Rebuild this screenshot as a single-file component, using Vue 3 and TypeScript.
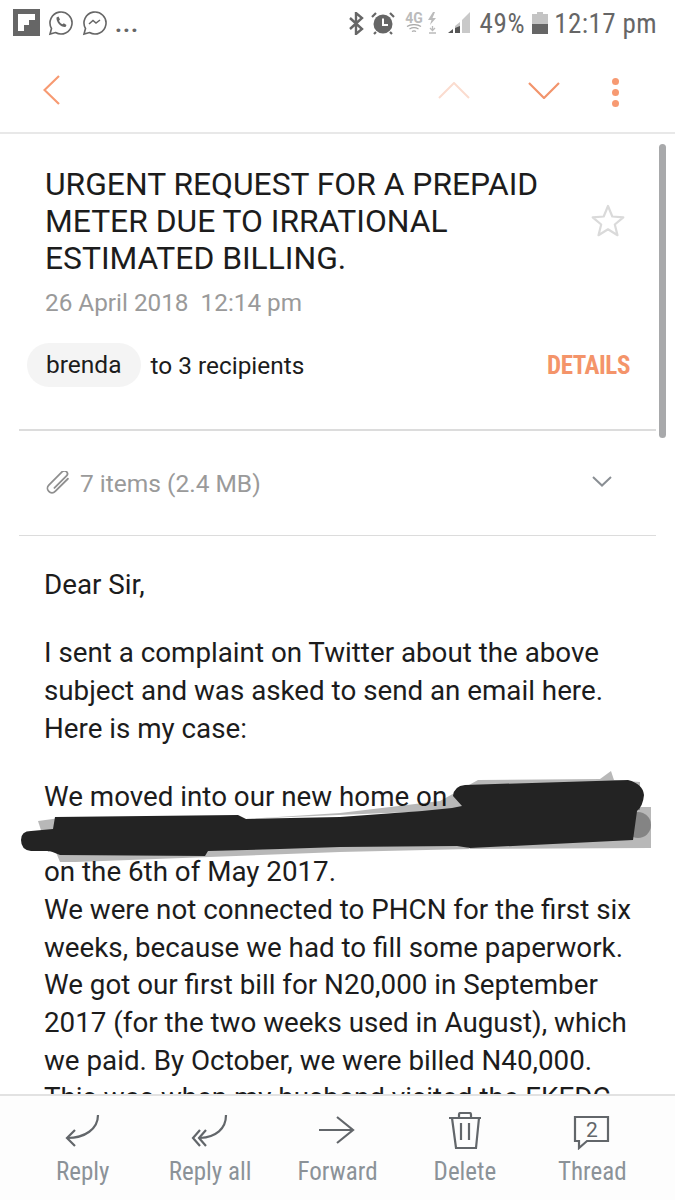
<template>
  <div class="screen">
    <div class="status">
      <svg class="ic-flip" width="27" height="27" viewBox="0 0 27 27">
        <rect width="27" height="27" fill="#666" />
        <path d="M5 5h17v6h-6v5h-5v6H5z" fill="#fff" />
      </svg>
      <svg class="ic-chat" width="25" height="26" viewBox="0 0 25 26" fill="none" stroke="#666" stroke-width="1.6">
        <path d="M2 24l1.500-5.500a11 11 0 1 1 4 4z" />
        <path d="M8.500 7.500l2-1 1.500 3-1 1.200c.8 1.700 2 2.900 3.600 3.600l1.200-1 2.700 1.700-1 2c-4.500.5-9.500-5-9-9.500z" fill="#666" stroke="none" />
      </svg>
      <svg class="ic-chat" width="25" height="26" viewBox="0 0 25 26" fill="none" stroke="#666" stroke-width="1.600">
        <path d="M2 24l1.500-5.500a11 11 0 1 1 4 4z" />
        <path d="M7 14l4-3.500 3 2.500 4-3" stroke-width="1.500" />
      </svg>
      <span class="more">...</span>
      <div class="spacer"></div>
      <svg class="ic-bt" width="16" height="23" viewBox="0 0 16 23" fill="none" stroke="#666" stroke-width="2.400">
        <path d="M2 6l12 11-6 5V1l6 5L2 17" />
      </svg>
      <svg class="ic-alarm" width="24" height="24" viewBox="0 0 24 24">
        <circle cx="12" cy="13" r="9.500" fill="#666" />
        <path d="M1 6l4-4M23 6l-4-4M5 21l-2 2M19 21l2 2" stroke="#666" stroke-width="2.200" />
        <path d="M12 7.500V14h5" stroke="#fff" stroke-width="2" fill="none" />
      </svg>
      <div class="net">
        <span class="net-label">4G</span>
        <svg width="16" height="9" viewBox="0 0 16 9" fill="none" stroke="#aaa" stroke-width="1.300">
          <path d="M1 2.500c4-2.500 10-2.500 14 0M3.500 5c2.500-1.500 6.500-1.500 9 0M6 7.500c1.200-.7 2.800-.7 4 0" />
        </svg>
      </div>
      <svg class="ic-bolt" width="11" height="22" viewBox="0 0 11 22">
        <path d="M6 0L1 8h3.500L3 13l6-7H5.500L8 0z" fill="#bbb" />
        <path d="M5.500 14v4M3 16l2.500 2.500L8 16M2 21h7" stroke="#bbb" stroke-width="1.300" fill="none" />
      </svg>
      <svg class="ic-signal" width="24" height="22" viewBox="0 0 24 22">
        <path d="M1 21l5-4v4z" fill="#555" />
        <path d="M8 14l5-4v11H8z" fill="#c4c4c4" />
        <path d="M8 21v-5l5-2v7z" fill="#555" />
        <path d="M15 8l8-8v21h-8z" fill="#c9c9c9" />
      </svg>
      <span class="batt-text">49%</span>
      <svg class="ic-batt" width="16" height="22" viewBox="0 0 16 22">
        <path d="M5 0h6v2h5v20H0V2h5z" fill="#c4c4c4" />
        <path d="M0 12h16v10H0z" fill="#666" />
      </svg>
      <span class="clock">12:17 pm</span>
    </div>

    <div class="appbar">
      <svg class="ic-back" width="17" height="30" viewBox="0 0 17 30" fill="none" stroke="#f79a72" stroke-width="2.200">
        <path d="M16 1L1.500 15 16 29" />
      </svg>
      <div class="spacer"></div>
      <svg class="ic-up" width="32" height="17" viewBox="0 0 32 17" fill="none" stroke="#fbdccf" stroke-width="2">
        <path d="M1 16L16 1l15 15" />
      </svg>
      <svg class="ic-down" width="32" height="17" viewBox="0 0 32 17" fill="none" stroke="#f2946c" stroke-width="2.200">
        <path d="M1 1l15 15L31 1" />
      </svg>
      <div class="dots"><i></i><i></i><i></i></div>
    </div>

    <div class="content">
      <div class="head">
        <div class="title-row">
          <h1 class="title">URGENT REQUEST FOR A PREPAID METER DUE TO IRRATIONAL ESTIMATED BILLING.</h1>
          <svg class="ic-star" width="34" height="33" viewBox="0 0 34 33" fill="none" stroke="#dadada" stroke-width="2.200" stroke-linejoin="round">
            <path d="M17 2l4.300 10.500 11 .8-8.500 7.200 2.700 10.700L17 25.300 7.500 31.200l2.700-10.700-8.500-7.200 11-.8z" />
          </svg>
        </div>
        <div class="date">26 April 2018&nbsp; 12:14 pm</div>
        <div class="sender-row">
          <span class="chip">brenda</span>
          <span class="recipients">to 3 recipients</span>
          <div class="spacer"></div>
          <span class="details">DETAILS</span>
        </div>
      </div>

      <div class="attach">
        <svg class="ic-clip" width="24" height="24" viewBox="0 0 24 24" fill="none" stroke="#8f8f8f" stroke-width="1.800" stroke-linecap="round">
          <g transform="rotate(45 12 12)">
            <path d="M16 2V20a4.500 4.500 0 0 1-9 0V1a3 3 0 0 1 6 0V18" />
          </g>
        </svg>
        <span class="attach-text">7 items (2.4 MB)</span>
        <div class="spacer"></div>
        <svg class="ic-expand" width="20" height="11" viewBox="0 0 20 11" fill="none" stroke="#8a8f94" stroke-width="2">
          <path d="M1 1l9 8.500L19 1" />
        </svg>
      </div>

      <div class="body">
        <p>Dear Sir,</p>
        <p>I sent a complaint on Twitter about the above subject and was asked to send an email here.<br />Here is my case:</p>
        <p>We moved into our new home on<br />&nbsp;<br />on the 6th of May 2017.<br />We were not connected to PHCN for the first six weeks, because we had to fill some paperwork.<br />We got our first bill for N20,000 in September 2017 (for the two weeks used in August), which we paid. By October, we were billed N40,000.<br />This was when my husband visited the EKEDC</p>
      </div>
    </div>

    <div class="toolbar">
      <div class="tool" v-for="t in tools" :key="t.label">
        <svg width="44" height="38" viewBox="0 0 44 38" fill="none" stroke="#62666a" stroke-width="2.200" v-html="t.icon"></svg>
        <span class="tool-label">{{ t.label }}</span>
      </div>
    </div>

    <div class="scrollbar"></div>

    <svg class="redact" width="675" height="110" viewBox="0 770 675 110">
      <g fill="#000" fill-opacity=".28">
        <path d="M38 821L60 818 60 852 48 852z" />
        <path d="M55 850L340 840 460 842 470 849 340 852 76 862 60 862z" />
        <path d="M245 819L340 813 440 801 478 780 600 779 611 771 614 780 640 782 640 810H460z" />
        <path d="M460 807H651V848L470 849z" />
        <circle cx="638" cy="825" r="13" />
      </g>
      <path fill="#232323" d="M21 840Q21 831 31 831L53 829 55 817 238 815 246 819 340 817 422 811 452 808 462 806 453 796Q454 786 465 785L628 780Q643 784 644 795 643 806 637 811L633 840 470 848 457 846 340 847 280 849 208 851 205 856 60 855 50 851 31 851Q21 850 21 840z" />
    </svg>
  </div>
</template>

<script setup lang="ts">
interface Tool {
  label: string
  icon: string
}

const tools: Tool[] = [
  {
    label: 'Reply',
    icon: '<path d="M37 3c0 14-13 23-31 23" /><path d="M14 18l-8 8 8 8" />'
  },
  {
    label: 'Reply all',
    icon: '<path d="M38 3c0 14-10 22-26 23" /><path d="M18 18l-7 8 7 8M12 18l-7 8 7 8" />'
  },
  {
    label: 'Forward',
    icon: '<path d="M4 18h34" /><path d="M22 5l16 13-16 13" />'
  },
  {
    label: 'Delete',
    icon: '<path d="M6 6h32M16 6V2.500c0-1 .5-1.500 1.500-1.500h9c1 0 1.500.5 1.500 1.500V6M9 6l4 30h20l3-30M18 11v17M26 11v17" />'
  },
  {
    label: 'Thread',
    icon: '<path d="M5 5h33v24H17l-8 7v-7H5z" /><text x="22" y="25" text-anchor="middle" font-size="21" fill="#62666a" stroke="none" font-family="Roboto, sans-serif">2</text>'
  }
]
</script>

<style>
html, body {
  background: #fff;
}
</style>

<style scoped>
.screen {
  position: relative;
  width: 675px;
  height: 1200px;
  display: flex;
  flex-direction: column;
  overflow: hidden;
  background: #fff;
  font-family: Roboto, "Liberation Sans", sans-serif;
  color: #1c1c1c;
}

.spacer {
  flex: 1;
}

.status {
  height: 50px;
  padding: 9px 18px 0 13px;
  box-sizing: border-box;
  display: flex;
  align-items: flex-start;
  color: #666;
  flex: none;
}

.ic-flip {
  margin-right: 8px;
}

.ic-chat {
  margin: 1px 9px 0 0;
}

.more {
  font-size: 24px;
  line-height: 26px;
  font-weight: 700;
  margin: 2px 0 0 -1px;
  letter-spacing: 1px;
}

.ic-bt {
  margin: 3px 7px 0 0;
}

.ic-alarm {
  margin: 2px 10px 0 0;
}

.net {
  width: 17px;
  margin-right: 5px;
  display: flex;
  flex-direction: column;
  align-items: center;
  margin-top: 3px;
}

.net-label {
  font-size: 14px;
  line-height: 12px;
  font-weight: 700;
  color: #bbb;
}

.ic-bolt {
  margin: 3px 9px 0 0;
}

.ic-signal {
  margin: 3px 8px 0 0;
}

.batt-text {
  font-size: 27px;
  line-height: 30px;
  font-stretch: 75%;
  letter-spacing: .7px;
  margin-right: 7px;
}

.ic-batt {
  margin: 3px 6px 0 0;
}

.clock {
  font-size: 27px;
  line-height: 30px;
  font-stretch: 75%;
  letter-spacing: .4px;
}

.appbar {
  height: 84px;
  flex: none;
  box-sizing: border-box;
  border-bottom: 2px solid #e8e8e8;
  display: flex;
  align-items: flex-start;
  padding: 25px 56px 0 43px;
}

.ic-up {
  margin: 7px 58px 0 0;
}

.ic-down {
  margin: 7px 52px 0 0;
}

.dots {
  display: flex;
  flex-direction: column;
  gap: 4px;
  margin-top: 3px;
}

.dots i {
  width: 7px;
  height: 7px;
  border-radius: 50%;
  background: #f79a72;
}

.content {
  flex: 1;
  min-height: 0;
  overflow: hidden;
}

.head {
  margin: 0 19px;
  padding: 32px 26px 0;
  height: 297px;
  box-sizing: border-box;
  border-bottom: 2px solid #dcdcdc;
}

.title-row {
  display: flex;
  align-items: center;
}

.title {
  width: 510px;
  margin: 0;
  font-size: 31.800px;
  line-height: 37px;
  font-weight: 400;
}

.ic-star {
  margin: -3px 0 0 36px;
}

.date {
  margin-top: 11px;
  font-size: 24.300px;
  line-height: 30px;
  color: #9a9a9a;
}

.sender-row {
  display: flex;
  align-items: center;
  margin: 25px 0 0 -18px;
}

.chip {
  background: #f4f4f4;
  border-radius: 22px;
  height: 44px;
  line-height: 44px;
  padding: 0 19px;
  font-size: 24.500px;
  margin-right: 10px;
}

.recipients {
  font-size: 24.400px;
}

.details {
  font-size: 25px;
  font-weight: 700;
  color: #f4946a;
  font-stretch: 75%;
  letter-spacing: -.4px;
}

.attach {
  margin: 0 19px;
  height: 105px;
  box-sizing: border-box;
  border-bottom: 1px solid #dcdcdc;
  display: flex;
  align-items: center;
  padding: 0 44px 0 27px;
}

.ic-clip {
  margin-right: 10px;
}

.attach-text {
  font-size: 24.500px;
  color: #9a9a9a;
}

.ic-expand {
  margin-top: -4px;
}

.body {
  padding: 30px 36px 0 44px;
  font-size: 27.750px;
  line-height: 37.700px;
}

.body p {
  margin: 0 0 30.500px;
}

.toolbar {
  height: 106px;
  flex: none;
  box-sizing: border-box;
  border-top: 2px solid #e2e2e2;
  background: #fdfdfd;
  display: grid;
  grid-template-columns: repeat(5, 1fr);
  padding: 16px 19px 0;
  position: relative;
}

.tool {
  display: flex;
  flex-direction: column;
  align-items: center;
}

.tool-label {
  margin-top: 6px;
  font-size: 25px;
  line-height: 32px;
  color: #8b9298;
  font-stretch: 75%;
}

.scrollbar {
  position: absolute;
  left: 659px;
  top: 144px;
  width: 7px;
  height: 294px;
  border-radius: 4px;
  background: #a8a9ab;
}

.redact {
  position: absolute;
  left: 0;
  top: 770px;
}
</style>
